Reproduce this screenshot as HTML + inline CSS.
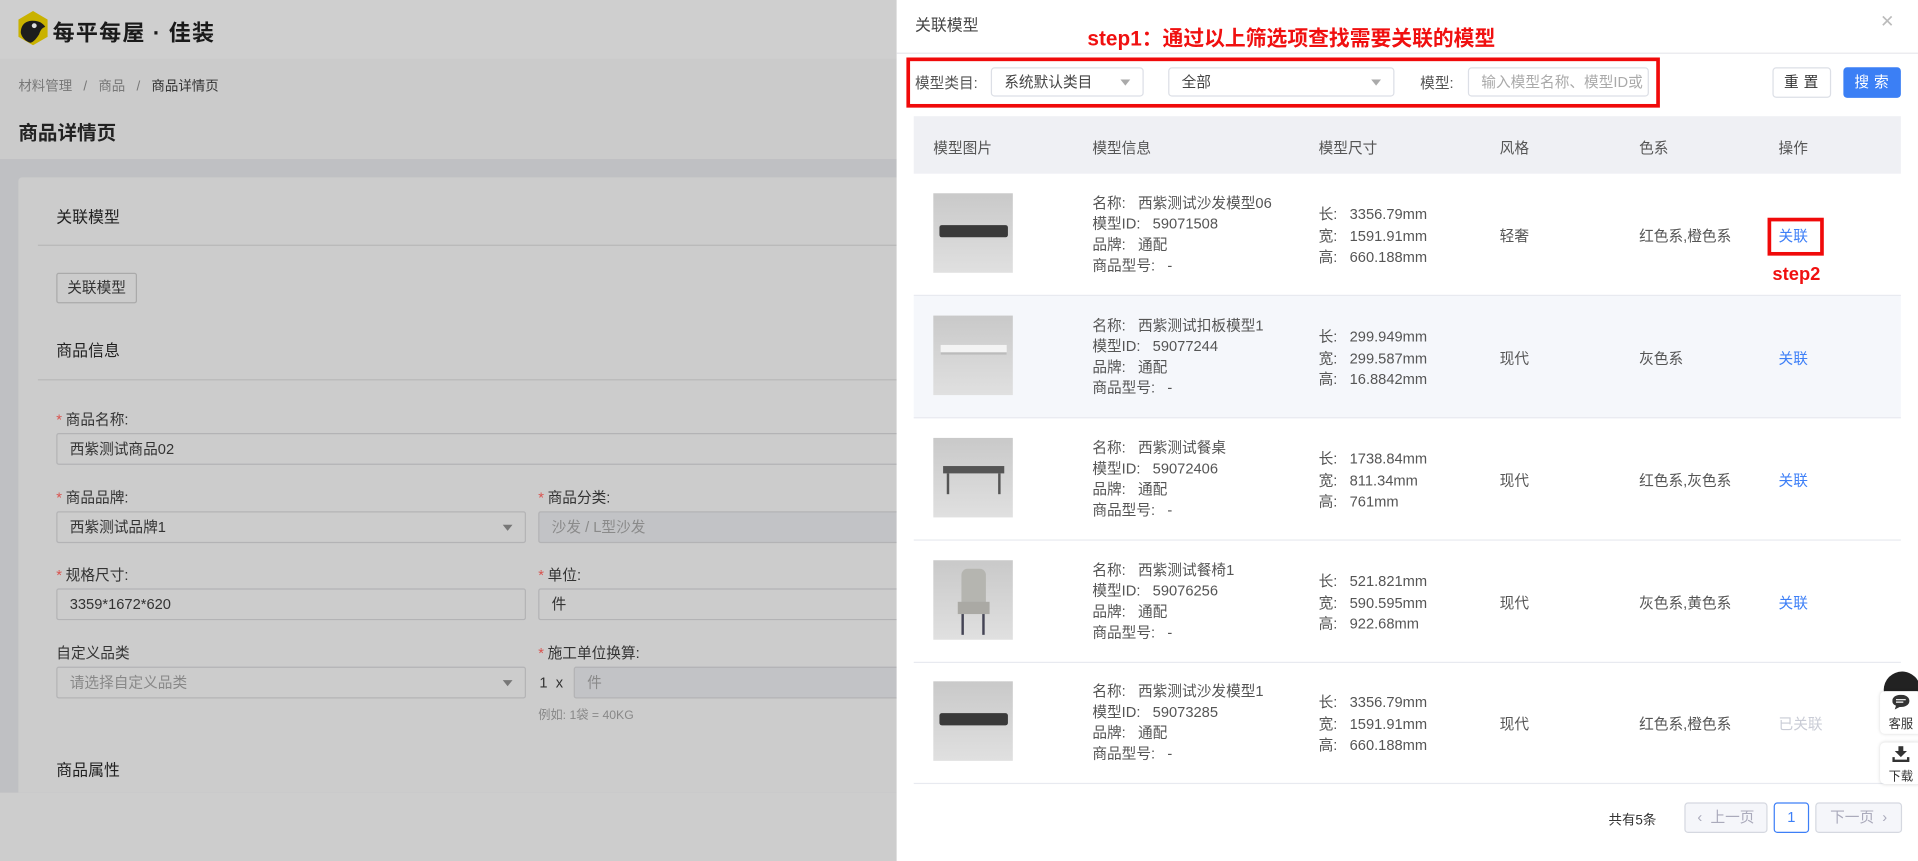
<!DOCTYPE html>
<html><head><meta charset="utf-8"><style>
*{box-sizing:border-box;margin:0;padding:0}
html,body{width:1918px;height:861px;overflow:hidden;background:#cdcdcd}
body{font-family:"Liberation Sans","Noto Sans CJK SC",sans-serif;color:#333}
#w{position:absolute;left:0;top:0;width:1568px;height:704px;transform:scale(1.22321);transform-origin:0 0;overflow:hidden;background:#cdcdcd}
.a{position:absolute;white-space:nowrap}
.lbl{font-size:12px;color:#333}
.lbl b{color:#d9534f;font-weight:normal;margin-right:3px}
.inp{position:absolute;height:26px;border:1px solid #b3b3b5;border-radius:2px;background:#cccccc;font-size:12px;padding-left:10px;line-height:24px;color:#333}
.dis{background:#c2c3c6;color:#8a8a8a}
.tri{position:absolute;right:10px;top:10px;width:0;height:0;border-left:4px solid transparent;border-right:4px solid transparent;border-top:5px solid #777}
.dlg{position:absolute;left:733px;top:0;width:835px;height:704px;background:#fff}
.f{font-size:12px;color:#555}
.sel{position:absolute;height:24px;border:1px solid #dcdfe6;border-radius:3px;font-size:12px;line-height:22px;padding-left:10px;color:#444;background:#fff}
.sel .tri{border-top-color:#aaa;top:9px}
.row{position:absolute;left:14px;width:807px;height:100px;border-bottom:1px solid #e8eaf0;font-size:12px;color:#555}
.row .img{position:absolute;left:16px;top:16px;width:65px;height:65px;background:linear-gradient(#c9c9c9,#e0e0e0);overflow:hidden}
.row .info{position:absolute;left:146px;top:16px;line-height:17px}
.row .dim{position:absolute;left:331px;top:25px;line-height:17.5px}
.row .sty{position:absolute;left:479px;top:42px}
.row .col{position:absolute;left:593px;top:42px}
.row .op{position:absolute;left:707px;top:42px;color:#3d7ff7}
.pg{position:absolute;top:656px;height:25px;border:1px solid #d5d8e0;border-radius:3px;background:#f5f6fa;color:#aab;font-size:12px;line-height:23px;text-align:center}
.side{position:absolute;left:1537px;width:34px;background:#fff;border-radius:4px;box-shadow:0 0 3px rgba(0,0,0,.15);font-size:10px;text-align:center;color:#333}
</style></head><body><div id="w">
<div class="a" style="left:0;top:0;width:733px;height:48px;background:#cfcfcf"></div>
<svg class="a" style="left:15px;top:9px" width="24" height="28" viewBox="0 0 24 28"><polygon points="12,0 24,7 24,21 12,28 0,21 0,7" fill="#c9b200"/><path d="M2 18 C2 11 6 8 12 8 C17 8 20 10 22 13 C19 14 18 16 17 19 C15 22 13 25 10 26 C6 25 3 22 2 18Z" fill="#1d1d1d"/><circle cx="13" cy="12" r="2" fill="#ddd"/></svg>
<div class="a" style="left:43px;top:13px;font-size:18px;font-weight:bold;color:#1a1a1a;letter-spacing:1px">每平每屋 · 佳装</div>
<div class="a" style="left:0;top:48px;width:733px;height:82px;background:#cbcbcb"></div>
<div class="a" style="left:15px;top:62px;font-size:11px;color:#777">材料管理 &nbsp;&nbsp;/&nbsp;&nbsp; 商品 &nbsp;&nbsp;/&nbsp;&nbsp; <span style="color:#333">商品详情页</span></div>
<div class="a" style="left:15px;top:95px;font-size:16px;font-weight:bold;color:#222">商品详情页</div>
<div class="a" style="left:0;top:130px;width:733px;height:518px;background:#bfc0c3"></div>
<div class="a" style="left:15px;top:145px;width:718px;height:503px;background:#cccccc;border-radius:3px 0 0 0"></div>
<div class="a" style="left:46px;top:167px;font-size:13px;color:#222">关联模型</div>
<div class="a" style="left:31px;top:200px;width:702px;height:1px;background:#b8b8b8"></div>
<div class="a" style="left:46px;top:223px;width:66px;height:25px;border:1px solid #aaa;border-radius:2px;font-size:12px;line-height:23px;text-align:center">关联模型</div>
<div class="a" style="left:46px;top:276px;font-size:13px;color:#222">商品信息</div>
<div class="a" style="left:31px;top:310px;width:702px;height:1px;background:#b8b8b8"></div>
<div class="a lbl" style="left:46px;top:334px"><b>*</b>商品名称:</div>
<div class="inp" style="left:46px;top:354px;width:700px">西紫测试商品02</div>
<div class="a lbl" style="left:46px;top:398px"><b>*</b>商品品牌:</div>
<div class="inp" style="left:46px;top:418px;width:384px">西紫测试品牌1<span class="tri"></span></div>
<div class="a lbl" style="left:440px;top:398px"><b>*</b>商品分类:</div>
<div class="inp dis" style="left:440px;top:418px;width:300px">沙发 / L型沙发</div>
<div class="a lbl" style="left:46px;top:461px"><b>*</b>规格尺寸:</div>
<div class="inp" style="left:46px;top:481px;width:384px">3359*1672*620</div>
<div class="a lbl" style="left:440px;top:461px"><b>*</b>单位:</div>
<div class="inp" style="left:440px;top:481px;width:300px">件</div>
<div class="a lbl" style="left:46px;top:525px">自定义品类</div>
<div class="inp" style="left:46px;top:545px;width:384px;color:#888">请选择自定义品类<span class="tri"></span></div>
<div class="a lbl" style="left:440px;top:525px"><b>*</b>施工单位换算:</div>
<div class="a" style="left:441px;top:551px;font-size:12px">1 &nbsp;x</div>
<div class="inp dis" style="left:469px;top:545px;width:280px">件</div>
<div class="a" style="left:440px;top:576px;font-size:10px;color:#888">例如: 1袋 = 40KG</div>
<div class="a" style="left:46px;top:619px;font-size:13px;color:#222">商品属性</div>

<div class="dlg">
<div class="a" style="left:15px;top:10px;font-size:13px;color:#444">关联模型</div>
<div class="a" style="left:804px;top:9px;font-size:14px;color:#bbb">✕</div>
<div class="a" style="left:0;top:43px;width:835px;height:1px;background:#e8e8ec"></div>
<div class="a" style="left:156px;top:17px;font-size:17px;font-weight:bold;color:#f01010">step1：通过以上筛选项查找需要关联的模型</div>
<div class="a" style="left:8px;top:47px;width:616px;height:41px;border:3px solid #f00a0a"></div>
<div class="a f" style="left:15px;top:59px">模型类目:</div>
<div class="sel" style="left:77px;top:55px;width:125px">系统默认类目<span class="tri"></span></div>
<div class="sel" style="left:222px;top:55px;width:185px">全部<span class="tri"></span></div>
<div class="a f" style="left:428px;top:59px">模型:</div>
<div class="sel" style="left:467px;top:55px;width:148px;color:#aaa">输入模型名称、模型ID或</div>
<div class="a" style="left:716px;top:55px;width:48px;height:25px;border:1px solid #dcdfe6;border-radius:3px;font-size:12px;line-height:23px;text-align:center;letter-spacing:4px;padding-left:3px">重置</div>
<div class="a" style="left:774px;top:55px;width:47px;height:25px;background:#3b7ff5;border-radius:3px;font-size:12px;line-height:25px;text-align:center;color:#fff;letter-spacing:4px;padding-left:3px">搜索</div>
<div class="a" style="left:14px;top:95px;width:807px;height:47px;background:#eff0f4;font-size:12px;color:#555">
<span class="a" style="left:16px;top:17px">模型图片</span><span class="a" style="left:146px;top:17px">模型信息</span><span class="a" style="left:331px;top:17px">模型尺寸</span><span class="a" style="left:479px;top:17px">风格</span><span class="a" style="left:593px;top:17px">色系</span><span class="a" style="left:707px;top:17px">操作</span></div>

<div class="row" style="top:142px"><div class="img"><div class="a" style="left:5px;top:26px;width:56px;height:10px;background:#3a3a3a;border-radius:2px"></div></div>
<div class="info">名称: &nbsp;&nbsp;西紫测试沙发模型06<br>模型ID: &nbsp;&nbsp;59071508<br>品牌: &nbsp;&nbsp;通配<br>商品型号: &nbsp;&nbsp;-</div>
<div class="dim">长: &nbsp;&nbsp;3356.79mm<br>宽: &nbsp;&nbsp;1591.91mm<br>高: &nbsp;&nbsp;660.188mm</div>
<div class="sty">轻奢</div><div class="col">红色系,橙色系</div><div class="op">关联</div>
<div class="a" style="left:698px;top:36px;width:46px;height:31px;border:3px solid #f00a0a"></div>
<div class="a" style="left:702px;top:74px;font-size:15px;font-weight:bold;color:#f01010">step2</div></div>

<div class="row" style="top:242px;background:#f5f7fb"><div class="img"><div class="a" style="left:6px;top:24px;width:54px;height:8px;background:#f3f3f3;border-bottom:2px solid #bbb"></div></div>
<div class="info">名称: &nbsp;&nbsp;西紫测试扣板模型1<br>模型ID: &nbsp;&nbsp;59077244<br>品牌: &nbsp;&nbsp;通配<br>商品型号: &nbsp;&nbsp;-</div>
<div class="dim">长: &nbsp;&nbsp;299.949mm<br>宽: &nbsp;&nbsp;299.587mm<br>高: &nbsp;&nbsp;16.8842mm</div>
<div class="sty">现代</div><div class="col">灰色系</div><div class="op">关联</div></div>

<div class="row" style="top:342px"><div class="img"><div class="a" style="left:8px;top:23px;width:50px;height:6px;background:#555"></div><div class="a" style="left:11px;top:29px;width:2px;height:17px;background:#555"></div><div class="a" style="left:53px;top:29px;width:2px;height:17px;background:#555"></div></div>
<div class="info">名称: &nbsp;&nbsp;西紫测试餐桌<br>模型ID: &nbsp;&nbsp;59072406<br>品牌: &nbsp;&nbsp;通配<br>商品型号: &nbsp;&nbsp;-</div>
<div class="dim">长: &nbsp;&nbsp;1738.84mm<br>宽: &nbsp;&nbsp;811.34mm<br>高: &nbsp;&nbsp;761mm</div>
<div class="sty">现代</div><div class="col">红色系,灰色系</div><div class="op">关联</div></div>

<div class="row" style="top:442px"><div class="img"><div class="a" style="left:23px;top:7px;width:20px;height:32px;background:#b5b5b0;border-radius:5px 5px 2px 2px"></div><div class="a" style="left:20px;top:34px;width:26px;height:10px;background:#aaa9a4"></div><div class="a" style="left:23px;top:44px;width:2px;height:17px;background:#445"></div><div class="a" style="left:40px;top:44px;width:2px;height:17px;background:#445"></div></div>
<div class="info">名称: &nbsp;&nbsp;西紫测试餐椅1<br>模型ID: &nbsp;&nbsp;59076256<br>品牌: &nbsp;&nbsp;通配<br>商品型号: &nbsp;&nbsp;-</div>
<div class="dim">长: &nbsp;&nbsp;521.821mm<br>宽: &nbsp;&nbsp;590.595mm<br>高: &nbsp;&nbsp;922.68mm</div>
<div class="sty">现代</div><div class="col">灰色系,黄色系</div><div class="op">关联</div></div>

<div class="row" style="top:541px"><div class="img"><div class="a" style="left:5px;top:26px;width:56px;height:10px;background:#3a3a3a;border-radius:2px"></div></div>
<div class="info">名称: &nbsp;&nbsp;西紫测试沙发模型1<br>模型ID: &nbsp;&nbsp;59073285<br>品牌: &nbsp;&nbsp;通配<br>商品型号: &nbsp;&nbsp;-</div>
<div class="dim">长: &nbsp;&nbsp;3356.79mm<br>宽: &nbsp;&nbsp;1591.91mm<br>高: &nbsp;&nbsp;660.188mm</div>
<div class="sty">现代</div><div class="col">红色系,橙色系</div><div class="op" style="color:#c9ccd6">已关联</div></div>

<div class="a" style="left:582px;top:662px;font-size:11px;color:#333">共有5条</div>
<div class="pg" style="left:644px;width:68px">‹ &nbsp;上一页</div>
<div class="pg" style="left:717px;width:29px;background:#fff;border-color:#3d7ff7;color:#3d7ff7">1</div>
<div class="pg" style="left:751px;width:71px">下一页 &nbsp;›</div>
</div>
<div class="a" style="left:1540px;top:549px;width:30px;height:30px;border-radius:50%;background:#222"></div>
<div class="side" style="top:565px;height:35px"><svg width="14" height="12" viewBox="0 0 14 12" style="margin-top:3px"><path d="M7 0C3 0 0 2 0 5c0 2 1 3 3 4l-1 3 4-2h1c4 0 7-2 7-5S11 0 7 0z" fill="#333"/><path d="M3 4h8M3 6h6" stroke="#fff"/></svg><div>客服</div></div>
<div class="side" style="top:607px;height:34px"><svg width="14" height="13" viewBox="0 0 14 13" style="margin-top:3px"><path d="M5 0h4v4h3L7 9 2 4h3z" fill="#333"/><path d="M1 9v3h12V9" stroke="#333" stroke-width="2" fill="none"/></svg><div>下载</div></div>
</div></body></html>
